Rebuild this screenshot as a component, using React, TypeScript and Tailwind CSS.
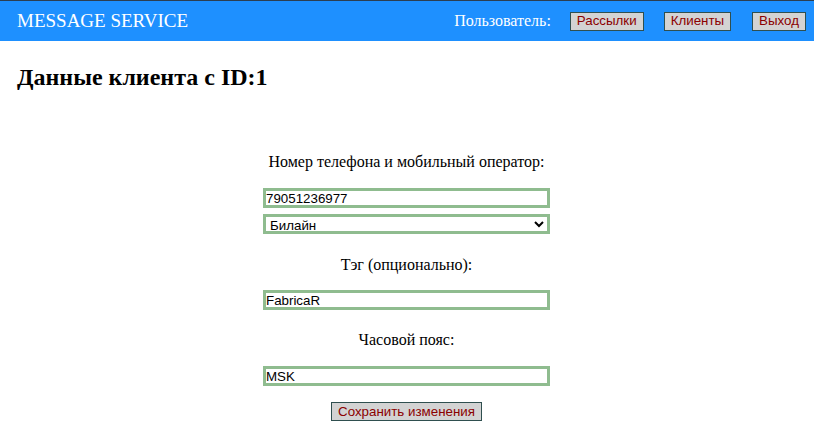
const serif = "font-['Liberation_Serif','Times_New_Roman',serif]";
const sans = "font-['Liberation_Sans',Arial,sans-serif]";

function NavButton({ label }: { label: string }) {
  return (
    <button className={`${sans} h-[19px] px-[6px] text-[13.333px] leading-none bg-[#d3d3d3] border border-[#2f4f4f] text-[#8b0000]`}>
      {label}
    </button>
  );
}

export default function App() {
  const field = `${sans} w-[287px] h-[20px] border-[3px] border-[#8fbc8f] px-0 text-[13.333px] leading-none text-black bg-white outline-none`;

  return (
    <div className={`${serif} w-[814px] h-[442px] bg-white text-black`}>
      <header className="h-[41px] border-t border-[#2c3e50] bg-[#1e90ff] flex items-center pl-[17px] pr-[8px]">
        <span className="text-[19px] text-white">MESSAGE SERVICE</span>
        <div className="ml-auto flex items-center">
          <span className="text-[16px] text-white mr-[19px]">Пользователь:</span>
          <NavButton label="Рассылки" />
          <div className="w-[20px]" />
          <NavButton label="Клиенты" />
          <div className="w-[21px]" />
          <NavButton label="Выход" />
        </div>
      </header>

      <h2 className="text-[24px] font-bold leading-[28px] mt-[22px] ml-[17px]">Данные клиента с ID:1</h2>

      <form className="flex flex-col items-center mt-[62px] pr-[1px]">
        <label className="text-[16px] leading-[18px]">Номер телефона и мобильный оператор:</label>
        <input className={`${field} mt-[17px]`} defaultValue="79051236977" />
        <select className={`${field} mt-[6px] bg-[#efefef] appearance-auto`} defaultValue="beeline">
          <option value="beeline">Билайн</option>
          <option value="mts">МТС</option>
          <option value="megafon">МегаФон</option>
        </select>

        <label className="text-[16px] leading-[18px] mt-[22px]">Тэг (опционально):</label>
        <input className={`${field} mt-[16px]`} defaultValue="FabricaR" />

        <label className="text-[16px] leading-[18px] mt-[21px]">Часовой пояс:</label>
        <input className={`${field} mt-[17px]`} defaultValue="MSK" />

        <button type="button" className={`${sans} mt-[16px] h-[19px] px-[6px] text-[13.333px] leading-none bg-[#d3d3d3] border border-[#2f4f4f] text-[#8b0000]`}>
          Сохранить изменения
        </button>
      </form>
    </div>
  );
}
